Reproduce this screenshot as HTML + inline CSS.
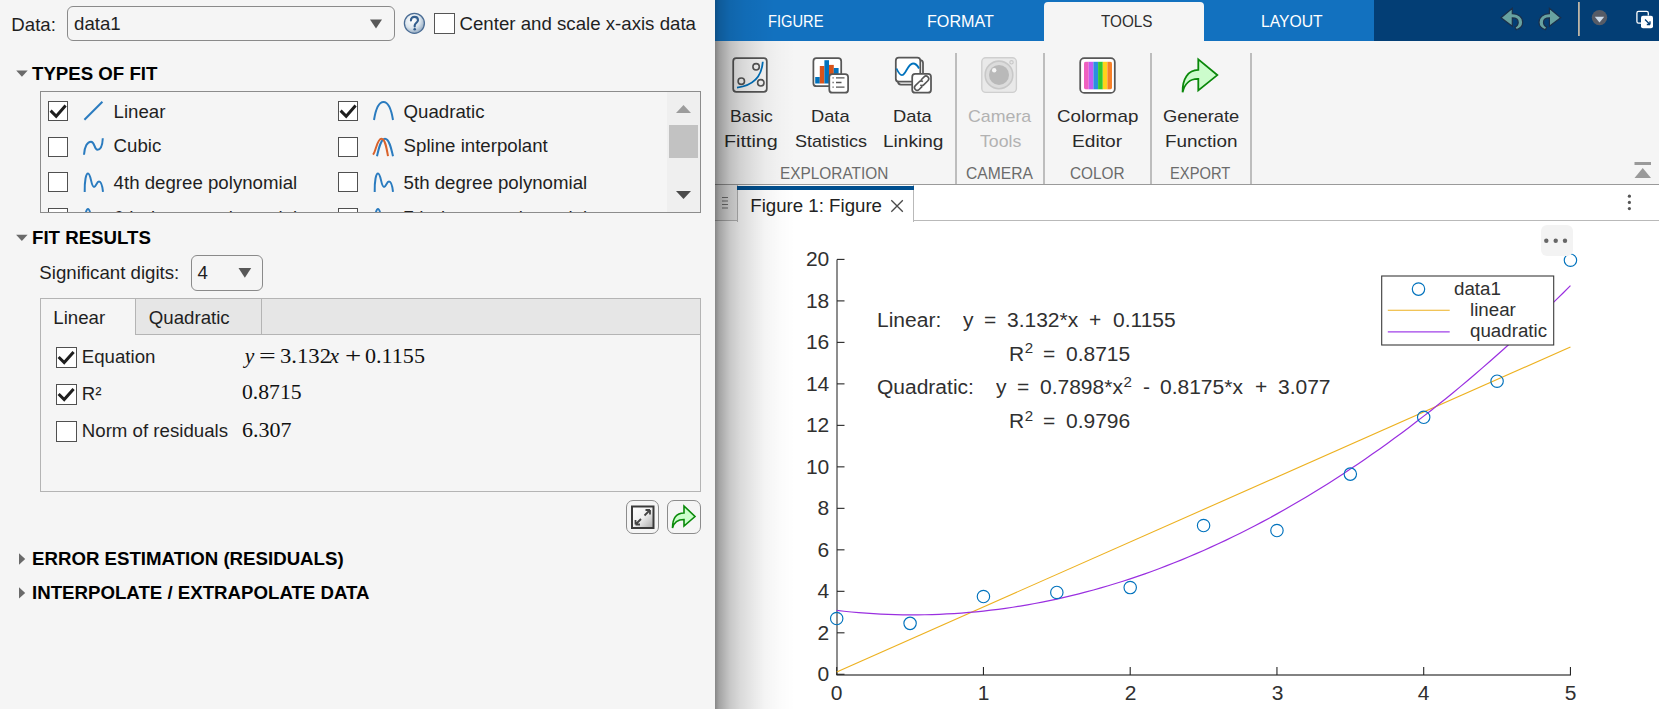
<!DOCTYPE html>
<html><head><meta charset="utf-8"><style>
html,body{margin:0;padding:0;}
body{width:1659px;height:709px;overflow:hidden;position:relative;background:#f5f5f5;font-family:"Liberation Sans", sans-serif;}
.t{position:absolute;white-space:pre;line-height:1;}
sup{font-size:0.72em;vertical-align:0;position:relative;top:-0.5em;margin-left:0.5px;}
</style></head><body>
<div class="t" style="left:11.30px;top:15.50px;font-size:18.67px;font-weight:400;color:#1f1f1f;font-family:'Liberation Sans', sans-serif;">Data:</div>
<div style="position:absolute;left:67px;top:6px;width:328px;height:35px;box-sizing:border-box;border:1px solid #8a8a8a;border-radius:6px;background:#f5f5f5"></div>
<div class="t" style="left:74.00px;top:15.20px;font-size:18.67px;font-weight:400;color:#1f1f1f;font-family:'Liberation Sans', sans-serif;">data1</div>
<svg style="position:absolute;left:0px;top:0px" width="1659" height="709" viewBox="0 0 1659 709"><path d="M370 19.5 L382 19.5 L376 28.5 Z" fill="#585858"/></svg>
<svg style="position:absolute;left:0px;top:0px" width="1659" height="709" viewBox="0 0 1659 709"><defs><radialGradient id="hg" cx="40%" cy="35%" r="70%"><stop offset="0" stop-color="#ffffff"/><stop offset="0.55" stop-color="#dce6ee"/><stop offset="1" stop-color="#8aa2bb"/></radialGradient></defs>
<circle cx="414.4" cy="23.3" r="10" fill="url(#hg)" stroke="#4a6c94" stroke-width="1.3"/>
<path d="M410.9 20.4 C410.9 18.2 412.5 16.9 414.4 16.9 C416.5 16.9 418 18.3 418 20.2 C418 22.4 414.9 23 414.7 25.3 L414.7 26.4" fill="none" stroke="#335e8e" stroke-width="2.1" stroke-linecap="round"/>
<circle cx="414.7" cy="29.3" r="1.3" fill="#335e8e"/></svg>
<div style="position:absolute;left:434px;top:13px;width:21px;height:21px;box-sizing:border-box;border:1px solid #555;background:#fff"></div>
<div class="t" style="left:459.50px;top:14.50px;font-size:18.67px;font-weight:400;color:#1f1f1f;font-family:'Liberation Sans', sans-serif;">Center and scale x-axis data</div>
<svg style="position:absolute;left:0px;top:0px" width="1659" height="709" viewBox="0 0 1659 709"><path d="M16.2 70.6 L27.7 70.6 L21.95 76.8 Z" fill="#6a6a6a"/></svg>
<div class="t" style="left:32.00px;top:64.50px;font-size:18.67px;font-weight:700;color:#000;font-family:'Liberation Sans', sans-serif;">TYPES OF FIT</div>
<div style="position:absolute;left:40px;top:91px;width:661px;height:122px;box-sizing:border-box;border:1px solid #8c8c8c;overflow:hidden">
<div style="position:absolute;left:-41px;top:-92px;width:1659px;height:709px">
<div style="position:absolute;left:48px;top:101px;width:20px;height:20px;box-sizing:border-box;border:1px solid #505050;background:#fff"></div>
<svg style="position:absolute;left:0px;top:0px" width="1659" height="709" viewBox="0 0 1659 709"><path d="M50.6 110.6 L56.2 116.2 L65.6 105.6" fill="none" stroke="#1e1e1e" stroke-width="3" stroke-linecap="butt" stroke-linejoin="miter"/></svg>
<svg style="position:absolute;left:0px;top:0px" width="1659" height="709" viewBox="0 0 1659 709"><path d="M84.4 119.8 L102.4 101.8" fill="none" stroke="#2a7bbf" stroke-width="2"/></svg>
<div class="t" style="left:113.60px;top:102.80px;font-size:18.67px;font-weight:400;color:#1f1f1f;font-family:'Liberation Sans', sans-serif;">Linear</div>
<div style="position:absolute;left:338px;top:101px;width:20px;height:20px;box-sizing:border-box;border:1px solid #505050;background:#fff"></div>
<svg style="position:absolute;left:0px;top:0px" width="1659" height="709" viewBox="0 0 1659 709"><path d="M340.6 110.6 L346.2 116.2 L355.6 105.6" fill="none" stroke="#1e1e1e" stroke-width="3" stroke-linecap="butt" stroke-linejoin="miter"/></svg>
<svg style="position:absolute;left:0px;top:0px" width="1659" height="709" viewBox="0 0 1659 709"><path d="M374 120.0 C376 107.5 379.5 102.0 383.5 102.0 C387.5 102.0 391 107.5 393 120.0" fill="none" stroke="#2a7bbf" stroke-width="2"/></svg>
<div class="t" style="left:403.60px;top:102.80px;font-size:18.67px;font-weight:400;color:#1f1f1f;font-family:'Liberation Sans', sans-serif;">Quadratic</div>
<div style="position:absolute;left:48px;top:136.7px;width:20px;height:20px;box-sizing:border-box;border:1px solid #505050;background:#fff"></div>
<svg style="position:absolute;left:0px;top:0px" width="1659" height="709" viewBox="0 0 1659 709"><path d="M84 154.7 C84.5 146.2 87.5 141.7 91 141.7 C95 141.7 94 149.7 97.5 149.7 C101 149.7 102.5 144.2 102.8 138.2" fill="none" stroke="#2a7bbf" stroke-width="2"/></svg>
<div class="t" style="left:113.60px;top:137.40px;font-size:18.67px;font-weight:400;color:#1f1f1f;font-family:'Liberation Sans', sans-serif;">Cubic</div>
<div style="position:absolute;left:338px;top:136.7px;width:20px;height:20px;box-sizing:border-box;border:1px solid #505050;background:#fff"></div>
<svg style="position:absolute;left:0px;top:0px" width="1659" height="709" viewBox="0 0 1659 709"><path d="M377 156.2 C379 147.2 381 138.7 385 138.7 C389 138.7 391 147.2 393 156.2" fill="none" stroke="#2a7bbf" stroke-width="2"/><path d="M373 154.7 C376 151.2 377 138.7 381.5 138.7 C385 138.7 386.5 147.2 388 156.2" fill="none" stroke="#d9622b" stroke-width="2"/></svg>
<div class="t" style="left:403.60px;top:137.40px;font-size:18.67px;font-weight:400;color:#1f1f1f;font-family:'Liberation Sans', sans-serif;">Spline interpolant</div>
<div style="position:absolute;left:48px;top:172.4px;width:20px;height:20px;box-sizing:border-box;border:1px solid #505050;background:#fff"></div>
<svg style="position:absolute;left:0px;top:0px" width="1659" height="709" viewBox="0 0 1659 709"><path d="M84.7 191.9 C84.5 180.9 86 173.4 88 173.4 C91 173.4 91 186.9 94 186.9 C96.5 186.9 96.5 181.4 99 181.4 C101.5 181.4 102.5 186.9 103 191.9" fill="none" stroke="#2a7bbf" stroke-width="2"/></svg>
<div class="t" style="left:113.60px;top:173.80px;font-size:18.67px;font-weight:400;color:#1f1f1f;font-family:'Liberation Sans', sans-serif;">4th degree polynomial</div>
<div style="position:absolute;left:338px;top:172.4px;width:20px;height:20px;box-sizing:border-box;border:1px solid #505050;background:#fff"></div>
<svg style="position:absolute;left:0px;top:0px" width="1659" height="709" viewBox="0 0 1659 709"><path d="M374.7 191.9 C374.5 180.9 376 173.4 378 173.4 C381 173.4 381 186.9 384 186.9 C386.5 186.9 386.5 181.4 389 181.4 C391.5 181.4 392.5 186.9 393 191.9" fill="none" stroke="#2a7bbf" stroke-width="2"/></svg>
<div class="t" style="left:403.60px;top:173.80px;font-size:18.67px;font-weight:400;color:#1f1f1f;font-family:'Liberation Sans', sans-serif;">5th degree polynomial</div>
<div style="position:absolute;left:48px;top:208.1px;width:20px;height:20px;box-sizing:border-box;border:1px solid #505050;background:#fff"></div>
<svg style="position:absolute;left:0px;top:0px" width="1659" height="709" viewBox="0 0 1659 709"><path d="M84.7 227.6 C84.5 216.6 86 209.1 88 209.1 C91 209.1 91 222.6 94 222.6 C96.5 222.6 96.5 217.1 99 217.1 C101.5 217.1 102.5 222.6 103 227.6" fill="none" stroke="#2a7bbf" stroke-width="2"/></svg>
<div class="t" style="left:113.60px;top:209.40px;font-size:18.67px;font-weight:400;color:#1f1f1f;font-family:'Liberation Sans', sans-serif;">6th degree polynomial</div>
<div style="position:absolute;left:338px;top:208.1px;width:20px;height:20px;box-sizing:border-box;border:1px solid #505050;background:#fff"></div>
<svg style="position:absolute;left:0px;top:0px" width="1659" height="709" viewBox="0 0 1659 709"><path d="M374.7 227.6 C374.5 216.6 376 209.1 378 209.1 C381 209.1 381 222.6 384 222.6 C386.5 222.6 386.5 217.1 389 217.1 C391.5 217.1 392.5 222.6 393 227.6" fill="none" stroke="#2a7bbf" stroke-width="2"/></svg>
<div class="t" style="left:403.60px;top:209.40px;font-size:18.67px;font-weight:400;color:#1f1f1f;font-family:'Liberation Sans', sans-serif;">7th degree polynomial</div>
<div style="position:absolute;left:667px;top:92px;width:33px;height:120px;box-sizing:border-box;background:#efefef"></div>
<div style="position:absolute;left:669px;top:125px;width:29px;height:33px;box-sizing:border-box;background:#c2c2c2"></div>
<svg style="position:absolute;left:0px;top:0px" width="1659" height="709" viewBox="0 0 1659 709"><path d="M676 113 L691 113 L683.5 105 Z" fill="#9c9c9c"/><path d="M676 191 L691 191 L683.5 199 Z" fill="#4a4a4a"/></svg>
</div></div>
<svg style="position:absolute;left:0px;top:0px" width="1659" height="709" viewBox="0 0 1659 709"><path d="M16.1 234.8 L27.6 234.8 L21.85 241.0 Z" fill="#6a6a6a"/></svg>
<div class="t" style="left:32.00px;top:228.60px;font-size:18.67px;font-weight:700;color:#000;font-family:'Liberation Sans', sans-serif;">FIT RESULTS</div>
<div class="t" style="left:39.30px;top:264.30px;font-size:18.67px;font-weight:400;color:#1f1f1f;font-family:'Liberation Sans', sans-serif;">Significant digits:</div>
<div style="position:absolute;left:191px;top:255px;width:72px;height:36px;box-sizing:border-box;border:1px solid #8a8a8a;border-radius:6px;background:#f5f5f5"></div>
<div class="t" style="left:197.50px;top:264.00px;font-size:18.67px;font-weight:400;color:#1f1f1f;font-family:'Liberation Sans', sans-serif;">4</div>
<svg style="position:absolute;left:0px;top:0px" width="1659" height="709" viewBox="0 0 1659 709"><path d="M238.5 268 L251.2 268 L244.85 277.7 Z" fill="#585858"/></svg>
<div style="position:absolute;left:40px;top:298px;width:661px;height:194px;box-sizing:border-box;border:1px solid #b4b4b4;background:#f5f5f5"></div>
<div style="position:absolute;left:41px;top:299px;width:659px;height:36px;box-sizing:border-box;background:#e6e6e6;border-bottom:1px solid #b4b4b4"></div>
<div style="position:absolute;left:41px;top:299px;width:95px;height:36px;box-sizing:border-box;background:#f5f5f5;border-right:1px solid #b4b4b4"></div>
<div style="position:absolute;left:136px;top:299px;width:126px;height:36px;box-sizing:border-box;border-right:1px solid #b4b4b4"></div>
<div class="t" style="left:53.30px;top:308.80px;font-size:18.67px;font-weight:400;color:#1f1f1f;font-family:'Liberation Sans', sans-serif;">Linear</div>
<div class="t" style="left:148.80px;top:308.80px;font-size:18.67px;font-weight:400;color:#1f1f1f;font-family:'Liberation Sans', sans-serif;">Quadratic</div>
<div style="position:absolute;left:56px;top:347.4px;width:21px;height:21px;box-sizing:border-box;border:1px solid #505050;background:#fff"></div>
<svg style="position:absolute;left:0px;top:0px" width="1659" height="709" viewBox="0 0 1659 709"><path d="M58.6 357.0 L64.2 362.59999999999997 L73.6 352.0" fill="none" stroke="#1e1e1e" stroke-width="3" stroke-linecap="butt" stroke-linejoin="miter"/></svg>
<div style="position:absolute;left:56px;top:384.4px;width:21px;height:21px;box-sizing:border-box;border:1px solid #505050;background:#fff"></div>
<svg style="position:absolute;left:0px;top:0px" width="1659" height="709" viewBox="0 0 1659 709"><path d="M58.6 394.0 L64.2 399.59999999999997 L73.6 389.0" fill="none" stroke="#1e1e1e" stroke-width="3" stroke-linecap="butt" stroke-linejoin="miter"/></svg>
<div style="position:absolute;left:56px;top:421.2px;width:21px;height:21px;box-sizing:border-box;border:1px solid #505050;background:#fff"></div>
<div class="t" style="left:81.80px;top:348.40px;font-size:18.67px;font-weight:400;color:#1f1f1f;font-family:'Liberation Sans', sans-serif;">Equation</div>
<div class="t" style="left:81.80px;top:385.00px;font-size:18.67px;font-weight:400;color:#1f1f1f;font-family:'Liberation Sans', sans-serif;">R&#178;</div>
<div class="t" style="left:81.80px;top:421.80px;font-size:18.67px;font-weight:400;color:#1f1f1f;font-family:'Liberation Sans', sans-serif;">Norm of residuals</div>
<div class="t" style="left:244.80px;top:345.79px;font-size:21.5px;font-weight:400;color:#111;font-family:'Liberation Serif', serif;"><i>y</i></div>
<div class="t" style="left:259.02px;top:345.79px;font-size:21.5px;font-weight:400;color:#111;font-family:'Liberation Serif', serif;"><span style="display:inline-block;transform:scaleX(1.3762);transform-origin:left center">=</span></div>
<div class="t" style="left:280.25px;top:345.79px;font-size:21.5px;font-weight:400;color:#111;font-family:'Liberation Serif', serif;"><span style="display:inline-block;transform:scaleX(1.0541);transform-origin:left center">3.132</span></div>
<div class="t" style="left:329.50px;top:345.79px;font-size:21.5px;font-weight:400;color:#111;font-family:'Liberation Serif', serif;"><i>x</i></div>
<div class="t" style="left:344.86px;top:345.79px;font-size:21.5px;font-weight:400;color:#111;font-family:'Liberation Serif', serif;"><span style="display:inline-block;transform:scaleX(1.3366);transform-origin:left center">+</span></div>
<div class="t" style="left:365.18px;top:345.79px;font-size:21.5px;font-weight:400;color:#111;font-family:'Liberation Serif', serif;"><span style="display:inline-block;transform:scaleX(1.0282);transform-origin:left center">0.1155</span></div>
<div class="t" style="left:242.19px;top:382.09px;font-size:21.5px;font-weight:400;color:#111;font-family:'Liberation Serif', serif;"><span style="display:inline-block;transform:scaleX(1.0087);transform-origin:left center">0.8715</span></div>
<div class="t" style="left:242.08px;top:419.69px;font-size:21.5px;font-weight:400;color:#111;font-family:'Liberation Serif', serif;"><span style="display:inline-block;transform:scaleX(1.0235);transform-origin:left center">6.307</span></div>
<div style="position:absolute;left:626px;top:500px;width:33px;height:34px;box-sizing:border-box;border:1px solid #8c8c8c;border-radius:7px;background:#f5f5f5"></div>
<div style="position:absolute;left:667px;top:500px;width:34px;height:34px;box-sizing:border-box;border:1px solid #8c8c8c;border-radius:7px;background:#f5f5f5"></div>
<svg style="position:absolute;left:0px;top:0px" width="1659" height="709" viewBox="0 0 1659 709"><defs><linearGradient id="eg" x1="0" y1="0" x2="1" y2="1"><stop offset="0" stop-color="#ffffff"/><stop offset="0.5" stop-color="#f0f0f0"/><stop offset="1" stop-color="#a8a8a8"/></linearGradient></defs>
<rect x="632" y="506.5" width="21.5" height="21.5" fill="url(#eg)" stroke="#3a3a3a" stroke-width="2"/>
<path d="M635.5 524.5 L641 519 M635.5 524.5 L635.5 520 M635.5 524.5 L640 524.5 M650 510 L644.5 515.5 M650 510 L650 514.5 M650 510 L645.5 510" fill="none" stroke="#444" stroke-width="1.8"/></svg>
<svg style="position:absolute;left:0px;top:0px" width="1659" height="709" viewBox="0 0 1659 709"><path d="M672.5 528 C672.5 518 677 513 684 513 L684 506 L695 516.5 L684 526 L684 519.5 C678 519.5 674 522 672.5 528 Z" fill="#ccffcc" stroke="#0a8a0a" stroke-width="1.6" stroke-linejoin="miter"/></svg>
<svg style="position:absolute;left:0px;top:0px" width="1659" height="709" viewBox="0 0 1659 709"><path d="M19 553.3 L25.2 559.0 L19 564.6999999999999 Z" fill="#6a6a6a"/></svg>
<div class="t" style="left:32.00px;top:549.80px;font-size:18.67px;font-weight:700;color:#000;font-family:'Liberation Sans', sans-serif;">ERROR ESTIMATION (RESIDUALS)</div>
<svg style="position:absolute;left:0px;top:0px" width="1659" height="709" viewBox="0 0 1659 709"><path d="M19 587.2 L25.2 592.9000000000001 L19 598.6 Z" fill="#6a6a6a"/></svg>
<div class="t" style="left:32.00px;top:583.80px;font-size:18.67px;font-weight:700;color:#000;font-family:'Liberation Sans', sans-serif;">INTERPOLATE / EXTRAPOLATE DATA</div>
<div style="position:absolute;left:715px;top:0px;width:944px;height:709px;box-sizing:border-box;background:#ffffff"></div>
<div style="position:absolute;left:715px;top:0px;width:659px;height:41px;box-sizing:border-box;background:#1271bf"></div>
<div style="position:absolute;left:1374px;top:0px;width:285px;height:41px;box-sizing:border-box;background:#033e75"></div>
<div style="position:absolute;left:1044px;top:2px;width:160px;height:39px;box-sizing:border-box;background:#f5f5f5;border-radius:4px 4px 0 0"></div>
<div style="position:absolute;left:715px;top:41px;width:944px;height:144px;box-sizing:border-box;background:#f5f5f5;border-bottom:1px solid #9a9a9a"></div>
<div class="t" style="left:767.99px;top:12.61px;font-size:17px;font-weight:400;color:#fff;font-family:'Liberation Sans', sans-serif;"><span style="display:inline-block;transform:scaleX(0.8647);transform-origin:left center">FIGURE</span></div>
<div class="t" style="left:927.17px;top:12.61px;font-size:17px;font-weight:400;color:#fff;font-family:'Liberation Sans', sans-serif;"><span style="display:inline-block;transform:scaleX(0.9491);transform-origin:left center">FORMAT</span></div>
<div class="t" style="left:1100.64px;top:12.61px;font-size:17px;font-weight:400;color:#2e2e2e;font-family:'Liberation Sans', sans-serif;"><span style="display:inline-block;transform:scaleX(0.8986);transform-origin:left center">TOOLS</span></div>
<div class="t" style="left:1260.71px;top:12.61px;font-size:17px;font-weight:400;color:#fff;font-family:'Liberation Sans', sans-serif;"><span style="display:inline-block;transform:scaleX(0.9231);transform-origin:left center">LAYOUT</span></div>
<div style="position:absolute;left:955px;top:53px;width:2px;height:131px;box-sizing:border-box;background:#bdbdbd"></div>
<div style="position:absolute;left:1043px;top:53px;width:2px;height:131px;box-sizing:border-box;background:#bdbdbd"></div>
<div style="position:absolute;left:1150px;top:53px;width:2px;height:131px;box-sizing:border-box;background:#bdbdbd"></div>
<div style="position:absolute;left:1250px;top:53px;width:2px;height:131px;box-sizing:border-box;background:#bdbdbd"></div>
<div class="t" style="left:729.56px;top:108.31px;font-size:17px;font-weight:400;color:#2a2a2a;font-family:'Liberation Sans', sans-serif;"><span style="display:inline-block;transform:scaleX(1.0302);transform-origin:left center">Basic</span></div>
<div class="t" style="left:723.98px;top:132.91px;font-size:17px;font-weight:400;color:#2a2a2a;font-family:'Liberation Sans', sans-serif;"><span style="display:inline-block;transform:scaleX(1.1598);transform-origin:left center">Fitting</span></div>
<div class="t" style="left:810.69px;top:108.31px;font-size:17px;font-weight:400;color:#2a2a2a;font-family:'Liberation Sans', sans-serif;"><span style="display:inline-block;transform:scaleX(1.0751);transform-origin:left center">Data</span></div>
<div class="t" style="left:794.55px;top:132.91px;font-size:17px;font-weight:400;color:#2a2a2a;font-family:'Liberation Sans', sans-serif;"><span style="display:inline-block;transform:scaleX(1.0601);transform-origin:left center">Statistics</span></div>
<div class="t" style="left:893.49px;top:108.31px;font-size:17px;font-weight:400;color:#2a2a2a;font-family:'Liberation Sans', sans-serif;"><span style="display:inline-block;transform:scaleX(1.0780);transform-origin:left center">Data</span></div>
<div class="t" style="left:883.23px;top:132.91px;font-size:17px;font-weight:400;color:#2a2a2a;font-family:'Liberation Sans', sans-serif;"><span style="display:inline-block;transform:scaleX(1.1226);transform-origin:left center">Linking</span></div>
<div class="t" style="left:967.96px;top:108.31px;font-size:17px;font-weight:400;color:#b2b2b2;font-family:'Liberation Sans', sans-serif;"><span style="display:inline-block;transform:scaleX(1.0452);transform-origin:left center">Camera</span></div>
<div class="t" style="left:979.88px;top:132.91px;font-size:17px;font-weight:400;color:#b2b2b2;font-family:'Liberation Sans', sans-serif;"><span style="display:inline-block;transform:scaleX(1.0413);transform-origin:left center">Tools</span></div>
<div class="t" style="left:1056.52px;top:108.31px;font-size:17px;font-weight:400;color:#2a2a2a;font-family:'Liberation Sans', sans-serif;"><span style="display:inline-block;transform:scaleX(1.1039);transform-origin:left center">Colormap</span></div>
<div class="t" style="left:1072.12px;top:132.91px;font-size:17px;font-weight:400;color:#2a2a2a;font-family:'Liberation Sans', sans-serif;"><span style="display:inline-block;transform:scaleX(1.1265);transform-origin:left center">Editor</span></div>
<div class="t" style="left:1162.84px;top:108.31px;font-size:17px;font-weight:400;color:#2a2a2a;font-family:'Liberation Sans', sans-serif;"><span style="display:inline-block;transform:scaleX(1.0765);transform-origin:left center">Generate</span></div>
<div class="t" style="left:1164.64px;top:132.91px;font-size:17px;font-weight:400;color:#2a2a2a;font-family:'Liberation Sans', sans-serif;"><span style="display:inline-block;transform:scaleX(1.1116);transform-origin:left center">Function</span></div>
<div class="t" style="left:779.65px;top:166.46px;font-size:16px;font-weight:400;color:#6b6b6b;font-family:'Liberation Sans', sans-serif;"><span style="display:inline-block;transform:scaleX(0.9619);transform-origin:left center">EXPLORATION</span></div>
<div class="t" style="left:966.02px;top:166.46px;font-size:16px;font-weight:400;color:#6b6b6b;font-family:'Liberation Sans', sans-serif;"><span style="display:inline-block;transform:scaleX(0.9763);transform-origin:left center">CAMERA</span></div>
<div class="t" style="left:1069.93px;top:166.46px;font-size:16px;font-weight:400;color:#6b6b6b;font-family:'Liberation Sans', sans-serif;"><span style="display:inline-block;transform:scaleX(0.9602);transform-origin:left center">COLOR</span></div>
<div class="t" style="left:1170.30px;top:166.46px;font-size:16px;font-weight:400;color:#6b6b6b;font-family:'Liberation Sans', sans-serif;"><span style="display:inline-block;transform:scaleX(0.9201);transform-origin:left center">EXPORT</span></div>
<svg style="position:absolute;left:0px;top:0px" width="1659" height="709" viewBox="0 0 1659 709"><rect x="733.2" y="58.2" width="33.6" height="33.6" rx="3" fill="#fafafa" stroke="#575757" stroke-width="1.75"/><circle cx="756.1" cy="66.8" r="3.2" fill="none" stroke="#575757" stroke-width="1.6"/><circle cx="741.3" cy="81.2" r="3.2" fill="none" stroke="#575757" stroke-width="1.6"/><circle cx="760.8" cy="82.8" r="3.2" fill="none" stroke="#575757" stroke-width="1.6"/><path d="M737 87.6 C750 86 761.5 79 762.8 61.8" fill="none" stroke="#0072bd" stroke-width="1.8"/><rect x="813.4" y="58.2" width="27.8" height="28" rx="3" fill="#fff" stroke="#575757" stroke-width="1.75"/><rect x="815.2" y="77" width="4.6" height="6.5" fill="#0072bd"/><rect x="819.8" y="66" width="4.6" height="17.5" fill="#d95319"/><rect x="824.4" y="60.2" width="4.6" height="23.3" fill="#0072bd"/><rect x="829" y="64.9" width="4.8" height="18.6" fill="#d95319"/><rect x="833.8" y="68" width="4.8" height="15.5" fill="#0072bd"/><rect x="829.3" y="74.1" width="18.8" height="18.6" rx="3" fill="#fff" stroke="#575757" stroke-width="1.75"/><path d="M832.5 77.8 h1.2 M836 77.8 h8.5 M832.5 82.5 h1.2 M836 82.5 h5.5 M832.5 87.2 h1.2 M836 87.2 h8.5" stroke="#555" stroke-width="1.3"/><rect x="898" y="60" width="25" height="24.5" rx="3" fill="#fff" stroke="#575757" stroke-width="1.75"/><rect x="895.8" y="57.7" width="24.5" height="24" rx="3" fill="#fff" stroke="#575757" stroke-width="1.75"/><path d="M896.5 68.5 C899 74 901 75.5 902.5 75 C906 74 908 63.5 913 63.5 C916 63.5 918 66.5 919 68.5" fill="none" stroke="#0072bd" stroke-width="1.8"/><rect x="912.2" y="73.9" width="18.8" height="18.8" rx="3" fill="#fff" stroke="#575757" stroke-width="1.75"/><g fill="none" stroke="#575757" stroke-width="1.6" stroke-linecap="butt" transform="translate(921.6 83.2) rotate(-45)"><path d="M1.8 -2.7 L6.2 -2.7 A2.7 2.7 0 0 1 6.2 2.7 L0.6 2.7 A2.7 2.7 0 0 1 -2.1 0.3"/><path d="M-1.8 2.7 L-6.2 2.7 A2.7 2.7 0 0 1 -6.2 -2.7 L-0.6 -2.7 A2.7 2.7 0 0 1 2.1 -0.3"/></g><rect x="981.8" y="57.8" width="34.6" height="34.6" rx="4" fill="#e9e9e9" stroke="#cfcfcf" stroke-width="1.4"/><circle cx="999" cy="74.9" r="13.8" fill="#dcdcdc" stroke="#c8c8c8" stroke-width="1.6"/><circle cx="999" cy="74.9" r="10" fill="#b9b9b9"/><circle cx="994.2" cy="70.2" r="2.2" fill="#f5f5f5"/><circle cx="1011.5" cy="62.3" r="1.7" fill="none" stroke="#c8c8c8" stroke-width="1.1"/><rect x="1080.2" y="58.2" width="34.6" height="34.7" rx="4" fill="#fff" stroke="#575757" stroke-width="1.75"/><clipPath id="cmclip"><rect x="1084" y="61.6" width="28" height="27.9" rx="2"/></clipPath><g clip-path="url(#cmclip)"><rect x="1084" y="61.6" width="4.7" height="28" fill="#f060c0"/><rect x="1088.7" y="61.6" width="4.7" height="28" fill="#c25cf0"/><rect x="1093.4" y="61.6" width="4.7" height="28" fill="#2a8fe0"/><rect x="1098.1" y="61.6" width="4.7" height="28" fill="#33c833"/><rect x="1102.8" y="61.6" width="4.6" height="28" fill="#ffd21a"/><rect x="1107.4" y="61.6" width="4.6" height="28" fill="#f88028"/></g><path d="M1182.6 92.3 C1182.2 79 1188 70 1198.3 69.9 L1198.3 59.4 L1217.3 75.1 L1198.3 90.4 L1198.3 78.9 C1190 78.6 1184.5 84 1182.6 92.3 Z" fill="#ccfccc" stroke="#0a880a" stroke-width="1.8" stroke-linejoin="miter"/><rect x="1634.5" y="162" width="16.5" height="3" fill="#9a9a9a"/><path d="M1634.5 178 L1651 178 L1642.75 168 Z" fill="#9a9a9a"/></svg>
<svg style="position:absolute;left:0px;top:0px" width="1659" height="709" viewBox="0 0 1659 709"><path d="M1501 17.8 L1512.3 8.4 L1512.3 13.7 C1518.5 13.7 1522.7 17.3 1522.7 22.2 C1522.7 25.5 1520.5 28.4 1516.3 29.8 L1515 27 C1517.5 25.8 1518.2 24 1518.2 22.4 C1518.2 19.7 1516 17.9 1512.3 17.9 L1512.3 26.2 Z" fill="#68a2a0" stroke="#1b2f4a" stroke-width="1.2" stroke-linejoin="miter"/><path d="M1560.7 17.8 L1549.4 8.4 L1549.4 13.7 C1543.2 13.7 1539 17.3 1539 22.2 C1539 25.5 1541.2 28.4 1545.4 29.8 L1546.7 27 C1544.2 25.8 1543.5 24 1543.5 22.4 C1543.5 19.7 1545.7 17.9 1549.4 17.9 L1549.4 26.2 Z" fill="#68a2a0" stroke="#1b2f4a" stroke-width="1.2" stroke-linejoin="miter"/><rect x="1578" y="2" width="1.8" height="34" fill="#bdb5a6"/><circle cx="1599.5" cy="17.6" r="7.7" fill="#565b66"/><path d="M1594.8 16.8 L1604.2 16.8 L1599.5 22.4 Z" fill="#cddcec"/><path d="M1641 23.2 L1638.5 23.2 Q1636.9 23.2 1636.9 21.6 L1636.9 13 Q1636.9 11.4 1638.5 11.4 L1646.6 11.4 Q1648.3 11.4 1648.3 13 L1648.3 15.5" fill="none" stroke="#fff" stroke-width="1.3"/><rect x="1641" y="15.8" width="12" height="12.4" rx="2" fill="#fff"/><path d="M1645 19.5 L1650 24.5 M1650 24.5 L1650 21.3 M1650 24.5 L1646.8 24.5" fill="none" stroke="#033e75" stroke-width="1.3"/></svg>
<div style="position:absolute;left:715px;top:185px;width:944px;height:36px;box-sizing:border-box;background:#fff;border-bottom:1px solid #b9b9b9"></div>
<div style="position:absolute;left:715px;top:185px;width:22px;height:36px;box-sizing:border-box;background:#efefef;border-bottom:1px solid #b9b9b9"></div>
<div style="position:absolute;left:737px;top:185px;width:177px;height:37px;box-sizing:border-box;background:#fff;border-left:1px solid #b9b9b9;border-right:1px solid #b9b9b9"></div>
<div style="position:absolute;left:737px;top:186px;width:177px;height:4px;box-sizing:border-box;background:#004f8f"></div>
<svg style="position:absolute;left:0px;top:0px" width="1659" height="709" viewBox="0 0 1659 709"><path d="M722 197.5 h6 M722 201 h6 M722 204.5 h6 M722 208 h6" stroke="#7a7a7a" stroke-width="1.2"/></svg>
<div class="t" style="left:750.30px;top:196.70px;font-size:18.67px;font-weight:400;color:#222;font-family:'Liberation Sans', sans-serif;">Figure 1: Figure</div>
<svg style="position:absolute;left:0px;top:0px" width="1659" height="709" viewBox="0 0 1659 709"><path d="M891.3 200.3 L902.8 211.8 M902.8 200.3 L891.3 211.8" stroke="#4a4a4a" stroke-width="1.3"/></svg>
<svg style="position:absolute;left:0px;top:0px" width="1659" height="709" viewBox="0 0 1659 709"><circle cx="1629.4" cy="196.2" r="1.6" fill="#555"/><circle cx="1629.4" cy="202.4" r="1.6" fill="#555"/><circle cx="1629.4" cy="208.6" r="1.6" fill="#555"/></svg>
<div class="t" style="left:229.60px;width:600px;text-align:right;top:664.37px;font-size:20px;font-weight:400;color:#303030;font-family:'Liberation Sans', sans-serif;"><span style="display:inline-block;transform:scaleX(1.0500);transform-origin:right center">0</span></div>
<div class="t" style="left:229.60px;width:600px;text-align:right;top:622.88px;font-size:20px;font-weight:400;color:#303030;font-family:'Liberation Sans', sans-serif;"><span style="display:inline-block;transform:scaleX(1.0500);transform-origin:right center">2</span></div>
<div class="t" style="left:229.60px;width:600px;text-align:right;top:581.39px;font-size:20px;font-weight:400;color:#303030;font-family:'Liberation Sans', sans-serif;"><span style="display:inline-block;transform:scaleX(1.0500);transform-origin:right center">4</span></div>
<div class="t" style="left:229.60px;width:600px;text-align:right;top:539.90px;font-size:20px;font-weight:400;color:#303030;font-family:'Liberation Sans', sans-serif;"><span style="display:inline-block;transform:scaleX(1.0500);transform-origin:right center">6</span></div>
<div class="t" style="left:229.60px;width:600px;text-align:right;top:498.41px;font-size:20px;font-weight:400;color:#303030;font-family:'Liberation Sans', sans-serif;"><span style="display:inline-block;transform:scaleX(1.0500);transform-origin:right center">8</span></div>
<div class="t" style="left:229.60px;width:600px;text-align:right;top:456.92px;font-size:20px;font-weight:400;color:#303030;font-family:'Liberation Sans', sans-serif;"><span style="display:inline-block;transform:scaleX(1.0500);transform-origin:right center">10</span></div>
<div class="t" style="left:229.60px;width:600px;text-align:right;top:415.43px;font-size:20px;font-weight:400;color:#303030;font-family:'Liberation Sans', sans-serif;"><span style="display:inline-block;transform:scaleX(1.0500);transform-origin:right center">12</span></div>
<div class="t" style="left:229.60px;width:600px;text-align:right;top:373.94px;font-size:20px;font-weight:400;color:#303030;font-family:'Liberation Sans', sans-serif;"><span style="display:inline-block;transform:scaleX(1.0500);transform-origin:right center">14</span></div>
<div class="t" style="left:229.60px;width:600px;text-align:right;top:332.45px;font-size:20px;font-weight:400;color:#303030;font-family:'Liberation Sans', sans-serif;"><span style="display:inline-block;transform:scaleX(1.0500);transform-origin:right center">16</span></div>
<div class="t" style="left:229.60px;width:600px;text-align:right;top:290.96px;font-size:20px;font-weight:400;color:#303030;font-family:'Liberation Sans', sans-serif;"><span style="display:inline-block;transform:scaleX(1.0500);transform-origin:right center">18</span></div>
<div class="t" style="left:229.60px;width:600px;text-align:right;top:249.47px;font-size:20px;font-weight:400;color:#303030;font-family:'Liberation Sans', sans-serif;"><span style="display:inline-block;transform:scaleX(1.0500);transform-origin:right center">20</span></div>
<div class="t" style="left:537.00px;width:600px;text-align:center;top:683.27px;font-size:20px;font-weight:400;color:#303030;font-family:'Liberation Sans', sans-serif;"><span style="display:inline-block;transform:scaleX(1.0500);transform-origin:center center">0</span></div>
<div class="t" style="left:683.75px;width:600px;text-align:center;top:683.27px;font-size:20px;font-weight:400;color:#303030;font-family:'Liberation Sans', sans-serif;"><span style="display:inline-block;transform:scaleX(1.0500);transform-origin:center center">1</span></div>
<div class="t" style="left:830.50px;width:600px;text-align:center;top:683.27px;font-size:20px;font-weight:400;color:#303030;font-family:'Liberation Sans', sans-serif;"><span style="display:inline-block;transform:scaleX(1.0500);transform-origin:center center">2</span></div>
<div class="t" style="left:977.25px;width:600px;text-align:center;top:683.27px;font-size:20px;font-weight:400;color:#303030;font-family:'Liberation Sans', sans-serif;"><span style="display:inline-block;transform:scaleX(1.0500);transform-origin:center center">3</span></div>
<div class="t" style="left:1124.00px;width:600px;text-align:center;top:683.27px;font-size:20px;font-weight:400;color:#303030;font-family:'Liberation Sans', sans-serif;"><span style="display:inline-block;transform:scaleX(1.0500);transform-origin:center center">4</span></div>
<div class="t" style="left:1270.75px;width:600px;text-align:center;top:683.27px;font-size:20px;font-weight:400;color:#303030;font-family:'Liberation Sans', sans-serif;"><span style="display:inline-block;transform:scaleX(1.0500);transform-origin:center center">5</span></div>
<svg style="position:absolute;left:0px;top:0px" width="1659" height="709" viewBox="0 0 1659 709"><line x1="837" y1="259.40" x2="837" y2="675" stroke="#262626" stroke-width="1.05"/><line x1="836.5" y1="674.9" x2="1570.95" y2="674.9" stroke="#585858" stroke-width="1.5"/><line x1="837" y1="674.30" x2="844.5" y2="674.30" stroke="#262626" stroke-width="1.1"/><line x1="837" y1="632.81" x2="844.5" y2="632.81" stroke="#262626" stroke-width="1.1"/><line x1="837" y1="591.32" x2="844.5" y2="591.32" stroke="#262626" stroke-width="1.1"/><line x1="837" y1="549.83" x2="844.5" y2="549.83" stroke="#262626" stroke-width="1.1"/><line x1="837" y1="508.34" x2="844.5" y2="508.34" stroke="#262626" stroke-width="1.1"/><line x1="837" y1="466.85" x2="844.5" y2="466.85" stroke="#262626" stroke-width="1.1"/><line x1="837" y1="425.36" x2="844.5" y2="425.36" stroke="#262626" stroke-width="1.1"/><line x1="837" y1="383.87" x2="844.5" y2="383.87" stroke="#262626" stroke-width="1.1"/><line x1="837" y1="342.38" x2="844.5" y2="342.38" stroke="#262626" stroke-width="1.1"/><line x1="837" y1="300.89" x2="844.5" y2="300.89" stroke="#262626" stroke-width="1.1"/><line x1="837" y1="259.40" x2="844.5" y2="259.40" stroke="#262626" stroke-width="1.1"/><line x1="836.70" y1="667" x2="836.70" y2="675" stroke="#262626" stroke-width="1.1"/><line x1="983.45" y1="667" x2="983.45" y2="675" stroke="#262626" stroke-width="1.1"/><line x1="1130.20" y1="667" x2="1130.20" y2="675" stroke="#262626" stroke-width="1.1"/><line x1="1276.95" y1="667" x2="1276.95" y2="675" stroke="#262626" stroke-width="1.1"/><line x1="1423.70" y1="667" x2="1423.70" y2="675" stroke="#262626" stroke-width="1.1"/><line x1="1570.45" y1="667" x2="1570.45" y2="675" stroke="#262626" stroke-width="1.1"/><line x1="836.70" y1="671.90" x2="1570.45" y2="347.04" stroke="#edb120" stroke-width="1.1"/><polyline points="836.70,610.47 844.04,611.27 851.38,612.00 858.71,612.64 866.05,613.20 873.39,613.68 880.73,614.08 888.06,614.40 895.40,614.63 902.74,614.78 910.08,614.85 917.41,614.84 924.75,614.74 932.09,614.57 939.43,614.31 946.76,613.97 954.10,613.55 961.44,613.05 968.78,612.46 976.11,611.79 983.45,611.04 990.79,610.21 998.12,609.30 1005.46,608.30 1012.80,607.22 1020.14,606.07 1027.48,604.82 1034.81,603.50 1042.15,602.10 1049.49,600.61 1056.83,599.04 1064.16,597.39 1071.50,595.66 1078.84,593.84 1086.17,591.95 1093.51,589.97 1100.85,587.91 1108.19,585.77 1115.53,583.54 1122.86,581.24 1130.20,578.85 1137.54,576.38 1144.88,573.83 1152.21,571.19 1159.55,568.48 1166.89,565.68 1174.22,562.80 1181.56,559.84 1188.90,556.80 1196.24,553.67 1203.58,550.46 1210.91,547.17 1218.25,543.80 1225.59,540.35 1232.93,536.81 1240.26,533.20 1247.60,529.50 1254.94,525.72 1262.28,521.86 1269.61,517.91 1276.95,513.89 1284.29,509.78 1291.62,505.59 1298.96,501.31 1306.30,496.96 1313.64,492.52 1320.97,488.01 1328.31,483.41 1335.65,478.72 1342.99,473.96 1350.33,469.12 1357.66,464.19 1365.00,459.18 1372.34,454.09 1379.68,448.91 1387.01,443.66 1394.35,438.32 1401.69,432.90 1409.03,427.40 1416.36,421.82 1423.70,416.15 1431.04,410.41 1438.38,404.58 1445.71,398.67 1453.05,392.67 1460.39,386.60 1467.72,380.44 1475.06,374.21 1482.40,367.89 1489.74,361.48 1497.08,355.00 1504.41,348.43 1511.75,341.79 1519.09,335.06 1526.43,328.24 1533.76,321.35 1541.10,314.37 1548.44,307.32 1555.78,300.18 1563.11,292.96 1570.45,285.65" fill="none" stroke="#9a2fe0" stroke-width="1.2"/><circle cx="836.70" cy="618.50" r="6.2" fill="none" stroke="#0072bd" stroke-width="1.15"/><circle cx="910.08" cy="623.37" r="6.2" fill="none" stroke="#0072bd" stroke-width="1.15"/><circle cx="983.45" cy="596.51" r="6.2" fill="none" stroke="#0072bd" stroke-width="1.15"/><circle cx="1056.83" cy="592.46" r="6.2" fill="none" stroke="#0072bd" stroke-width="1.15"/><circle cx="1130.20" cy="587.59" r="6.2" fill="none" stroke="#0072bd" stroke-width="1.15"/><circle cx="1203.58" cy="525.56" r="6.2" fill="none" stroke="#0072bd" stroke-width="1.15"/><circle cx="1276.95" cy="530.54" r="6.2" fill="none" stroke="#0072bd" stroke-width="1.15"/><circle cx="1350.33" cy="474.11" r="6.2" fill="none" stroke="#0072bd" stroke-width="1.15"/><circle cx="1423.70" cy="417.27" r="6.2" fill="none" stroke="#0072bd" stroke-width="1.15"/><circle cx="1497.08" cy="381.17" r="6.2" fill="none" stroke="#0072bd" stroke-width="1.15"/><circle cx="1570.45" cy="260.23" r="6.2" fill="none" stroke="#0072bd" stroke-width="1.15"/><rect x="1381.7" y="276" width="172" height="69" fill="#fff" stroke="#3a3a3a" stroke-width="1.1"/><circle cx="1418.5" cy="289.1" r="6.2" fill="none" stroke="#0072bd" stroke-width="1.15"/><line x1="1387.8" y1="310.3" x2="1449.7" y2="310.3" stroke="#edb120" stroke-width="1.1"/><line x1="1387.8" y1="331.9" x2="1449.7" y2="331.9" stroke="#a040e8" stroke-width="1.4"/><rect x="1541" y="225" width="32" height="31" rx="6" fill="#f3f3f3"/><circle cx="1546.3" cy="240.8" r="2.2" fill="#666"/><circle cx="1555.7" cy="240.8" r="2.2" fill="#666"/><circle cx="1565" cy="240.8" r="2.2" fill="#666"/></svg>
<div class="t" style="left:1454.10px;top:279.76px;font-size:18px;font-weight:400;color:#303030;font-family:'Liberation Sans', sans-serif;"><span style="display:inline-block;transform:scaleX(1.0400);transform-origin:left center">data1</span></div>
<div class="t" style="left:1470.00px;top:301.36px;font-size:18px;font-weight:400;color:#303030;font-family:'Liberation Sans', sans-serif;"><span style="display:inline-block;transform:scaleX(1.0400);transform-origin:left center">linear</span></div>
<div class="t" style="left:1470.00px;top:322.26px;font-size:18px;font-weight:400;color:#303030;font-family:'Liberation Sans', sans-serif;"><span style="display:inline-block;transform:scaleX(1.0400);transform-origin:left center">quadratic</span></div>
<div class="t" style="left:876.50px;top:309.87px;font-size:20px;font-weight:400;color:#303030;font-family:'Liberation Sans', sans-serif;"><span style="display:inline-block;transform:scaleX(1.0500);transform-origin:left center">Linear:</span></div>
<div class="t" style="left:962.80px;top:309.87px;font-size:20px;font-weight:400;color:#303030;font-family:'Liberation Sans', sans-serif;"><span style="display:inline-block;transform:scaleX(1.0500);transform-origin:left center">y</span></div>
<div class="t" style="left:984.20px;top:309.87px;font-size:20px;font-weight:400;color:#303030;font-family:'Liberation Sans', sans-serif;"><span style="display:inline-block;transform:scaleX(1.0500);transform-origin:left center">=</span></div>
<div class="t" style="left:1007.40px;top:309.87px;font-size:20px;font-weight:400;color:#303030;font-family:'Liberation Sans', sans-serif;"><span style="display:inline-block;transform:scaleX(1.0500);transform-origin:left center">3.132*x</span></div>
<div class="t" style="left:1089.40px;top:309.87px;font-size:20px;font-weight:400;color:#303030;font-family:'Liberation Sans', sans-serif;"><span style="display:inline-block;transform:scaleX(1.0500);transform-origin:left center">+</span></div>
<div class="t" style="left:1113.00px;top:309.87px;font-size:20px;font-weight:400;color:#303030;font-family:'Liberation Sans', sans-serif;"><span style="display:inline-block;transform:scaleX(1.0500);transform-origin:left center">0.1155</span></div>
<div class="t" style="left:1009.00px;top:343.67px;font-size:20px;font-weight:400;color:#303030;font-family:'Liberation Sans', sans-serif;"><span style="display:inline-block;transform:scaleX(1.0500);transform-origin:left center">R<sup>2</sup></span></div>
<div class="t" style="left:1043.30px;top:343.67px;font-size:20px;font-weight:400;color:#303030;font-family:'Liberation Sans', sans-serif;"><span style="display:inline-block;transform:scaleX(1.0500);transform-origin:left center">=</span></div>
<div class="t" style="left:1066.40px;top:343.67px;font-size:20px;font-weight:400;color:#303030;font-family:'Liberation Sans', sans-serif;"><span style="display:inline-block;transform:scaleX(1.0500);transform-origin:left center">0.8715</span></div>
<div class="t" style="left:876.50px;top:377.47px;font-size:20px;font-weight:400;color:#303030;font-family:'Liberation Sans', sans-serif;"><span style="display:inline-block;transform:scaleX(1.0500);transform-origin:left center">Quadratic:</span></div>
<div class="t" style="left:996.20px;top:377.47px;font-size:20px;font-weight:400;color:#303030;font-family:'Liberation Sans', sans-serif;"><span style="display:inline-block;transform:scaleX(1.0500);transform-origin:left center">y</span></div>
<div class="t" style="left:1017.20px;top:377.47px;font-size:20px;font-weight:400;color:#303030;font-family:'Liberation Sans', sans-serif;"><span style="display:inline-block;transform:scaleX(1.0500);transform-origin:left center">=</span></div>
<div class="t" style="left:1040.40px;top:377.47px;font-size:20px;font-weight:400;color:#303030;font-family:'Liberation Sans', sans-serif;"><span style="display:inline-block;transform:scaleX(1.0500);transform-origin:left center">0.7898*x<sup>2</sup></span></div>
<div class="t" style="left:1142.60px;top:377.47px;font-size:20px;font-weight:400;color:#303030;font-family:'Liberation Sans', sans-serif;"><span style="display:inline-block;transform:scaleX(1.0500);transform-origin:left center">-</span></div>
<div class="t" style="left:1160.00px;top:377.47px;font-size:20px;font-weight:400;color:#303030;font-family:'Liberation Sans', sans-serif;"><span style="display:inline-block;transform:scaleX(1.0500);transform-origin:left center">0.8175*x</span></div>
<div class="t" style="left:1254.50px;top:377.47px;font-size:20px;font-weight:400;color:#303030;font-family:'Liberation Sans', sans-serif;"><span style="display:inline-block;transform:scaleX(1.0500);transform-origin:left center">+</span></div>
<div class="t" style="left:1277.80px;top:377.47px;font-size:20px;font-weight:400;color:#303030;font-family:'Liberation Sans', sans-serif;"><span style="display:inline-block;transform:scaleX(1.0500);transform-origin:left center">3.077</span></div>
<div class="t" style="left:1009.00px;top:411.27px;font-size:20px;font-weight:400;color:#303030;font-family:'Liberation Sans', sans-serif;"><span style="display:inline-block;transform:scaleX(1.0500);transform-origin:left center">R<sup>2</sup></span></div>
<div class="t" style="left:1043.30px;top:411.27px;font-size:20px;font-weight:400;color:#303030;font-family:'Liberation Sans', sans-serif;"><span style="display:inline-block;transform:scaleX(1.0500);transform-origin:left center">=</span></div>
<div class="t" style="left:1066.40px;top:411.27px;font-size:20px;font-weight:400;color:#303030;font-family:'Liberation Sans', sans-serif;"><span style="display:inline-block;transform:scaleX(1.0500);transform-origin:left center">0.9796</span></div>
<div style="position:absolute;left:715px;top:41px;width:80px;height:668px;box-sizing:border-box;background:linear-gradient(to right, rgba(0,0,0,0.47) 0px, rgba(0,0,0,0.36) 4px, rgba(0,0,0,0.22) 15px, rgba(0,0,0,0.15) 25px, rgba(0,0,0,0.09) 38px, rgba(0,0,0,0.045) 50px, rgba(0,0,0,0.015) 65px, rgba(0,0,0,0) 80px);pointer-events:none"></div>
<div style="position:absolute;left:715px;top:0px;width:60px;height:41px;box-sizing:border-box;background:linear-gradient(to right, rgba(0,0,0,0.30) 0px, rgba(0,0,0,0.2) 4px, rgba(0,0,0,0.1) 15px, rgba(0,0,0,0.05) 30px, rgba(0,0,0,0) 60px);pointer-events:none"></div>
</body></html>
